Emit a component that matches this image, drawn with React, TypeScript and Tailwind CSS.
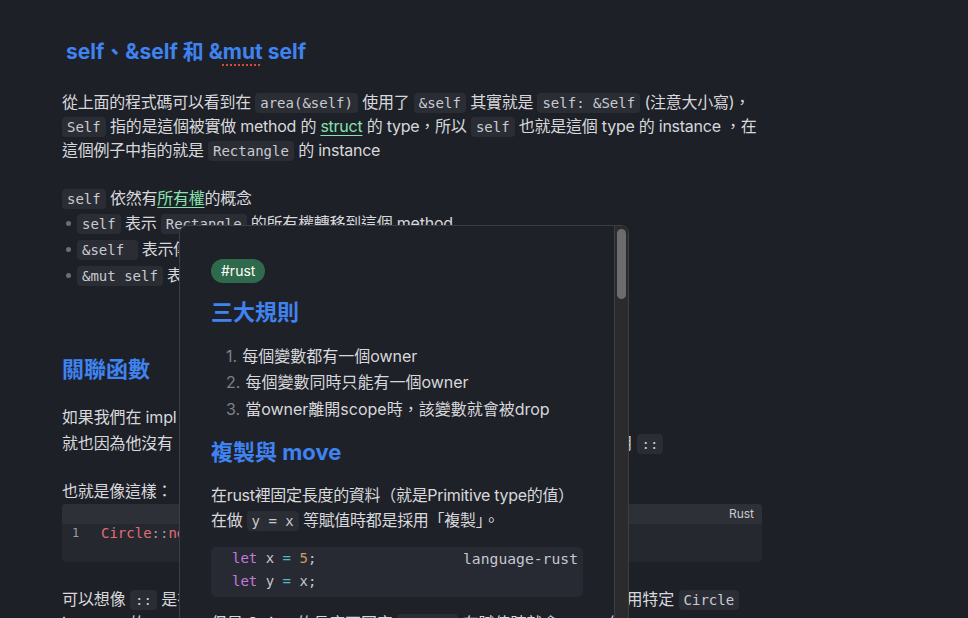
const code =
  "rounded-[4px] bg-[#2b2d35] px-[5px] py-[2px] font-['DejaVu_Sans_Mono',monospace] text-[14px] leading-[16px] tracking-normal text-[#c9cbd1]";

const link = "text-[#86e3b0] underline underline-offset-[3px] decoration-[#86e3b0]";

const Bullet = () => (
  <span className="mr-[6px] ml-[4px] inline-block h-[5px] w-[5px] translate-y-[-3px] rounded-full bg-[#6b6f78]" />
);

function Popover() {
  return (
    <div className="absolute left-[179px] top-[225px] flex h-[420px] w-[450px] overflow-hidden rounded-t-[8px] border border-[#3d3e44] bg-[#1f2129]">
      <div className="min-w-0 flex-1 overflow-hidden pl-[31px] pr-[31px] pt-[32px]">
        <span className="inline-flex h-[24px] items-center rounded-full bg-[#2e6a4b] px-[10px] text-[14px] text-white">
          #rust
        </span>
        <h3 className="mt-[14px] text-[22px] font-bold leading-[30px] text-[#3f83f0]">三大規則</h3>
        <ol className="mt-[16px] pl-[15px] text-[16px] leading-[26.5px]">
          <li>
            <span className="mr-[5px] text-[#7d828c]">1.</span>每個變數都有一個owner
          </li>
          <li>
            <span className="mr-[5px] text-[#7d828c]">2.</span>每個變數同時只能有一個owner
          </li>
          <li>
            <span className="mr-[5px] text-[#7d828c]">3.</span>當owner離開scope時，該變數就會被drop
          </li>
        </ol>
        <h3 className="mt-[15px] text-[22px] font-bold leading-[30px] text-[#3f83f0]">複製與 move</h3>
        <p className="mt-[16px] whitespace-nowrap text-[16px] leading-[25px] tracking-[-0.3px]">
          在rust裡固定長度的資料（就是Primitive type的值）
          <br />
          在做 <span className={code}>y = x</span> 等賦值時都是採用「複製」。
        </p>
        <div className="relative mt-[14px] rounded-[5px] bg-[#282a33] pb-[4px] pl-[21px] font-['DejaVu_Sans_Mono',monospace] text-[14px] leading-[23px] text-[#c5c8ce]">
          <span className="absolute right-[5px] top-0 text-[14.7px] text-[#c5c8ce]">language-rust</span>
          <div>
            <span className="text-[#c678dd]">let</span> x <span className="text-[#56b6c2]">=</span>{" "}
            <span className="text-[#d19a66]">5</span>;
          </div>
          <div>
            <span className="text-[#c678dd]">let</span> y <span className="text-[#56b6c2]">=</span> x;
          </div>
        </div>
        <p className="mt-[14px] whitespace-nowrap text-[16px] leading-[25px]">
          但是 String 的長度不固定 <span className={code}>let s2</span> 在賦值時就會 move 給新的變數
        </p>
      </div>
      <div className="w-[14px] shrink-0 border-l border-[#3d3e44] bg-[#2b2b2d] pl-[2px] pt-[3px]">
        <div className="h-[70px] w-[9px] rounded-full bg-[#6c6c6e]" />
      </div>
    </div>
  );
}

export default function App() {
  return (
    <div className="relative h-[618px] w-full overflow-hidden bg-[#1e2028] font-['Inter','Noto_Sans_CJK_TC',sans-serif] text-[#d7d8db]">
      <div className="ml-[62px] w-[700px] whitespace-nowrap pt-[37px] text-[16px] tracking-[-0.25px]">
        <h2 className="pl-[4px] text-[21px] font-bold leading-[30px] tracking-normal text-[#3f83f0]">
          self、&amp;self 和 &amp;
          <span className="underline decoration-[#d9483b] decoration-dotted decoration-2 underline-offset-[5px]">mut</span>{" "}
          self
        </h2>
        <p className="mt-[23px] leading-[24px]">
          從上面的程式碼可以看到在 <span className={code}>area(&amp;self)</span> 使用了{" "}
          <span className={code}>&amp;self</span> 其實就是 <span className={code}>self: &amp;Self</span> (注意大小寫)，
          <br />
          <span className={code}>Self</span> 指的是這個被實做 method 的 <span className={link}>struct</span> 的 type，所以{" "}
          <span className={code}>self</span> 也就是這個 type 的 instance ，在
          <br />
          這個例子中指的就是 <span className={code}>Rectangle</span> 的 instance
        </p>
        <p className="mt-[24px] leading-[24px]">
          <span className={code}>self</span> 依然有<span className={link}>所有權</span>的概念
        </p>
        <ul className="leading-[26px]">
          <li>
            <Bullet />
            <span className={code}>self</span> 表示 <span className={code}>Rectangle</span> 的所有權轉移到這個 method
          </li>
          <li>
            <Bullet />
            <span className={code}>&amp;self&nbsp;</span> 表示傳入 <span className={code}>Rectangle</span> 的不可變參考
          </li>
          <li>
            <Bullet />
            <span className={code}>&amp;mut self</span> 表示傳入 <span className={code}>Rectangle</span> 的可變參考
          </li>
        </ul>
        <h2 className="mt-[66px] text-[22px] font-bold leading-[30px] tracking-normal text-[#3f83f0]">關聯函數</h2>
        <p className="mt-[20px] leading-[26px] tracking-[-0.15px]">
          如果我們在 impl 裡定義的函數沒有 self 參數，就叫做關聯函數，
          <br />
          就也因為他沒有 「self」參數，所以不能透過實例加上點來呼叫函數，而是要使用{" "}
          <span className={code}>::</span>
        </p>
        <p className="mt-[22px] leading-[26px]">也就是像這樣：</p>
        <div className="overflow-hidden rounded-[4px] bg-[#262830] tracking-normal">
          <div className="flex h-[20px] items-center justify-end bg-[#2e3037] px-[8px] text-[12px] text-[#c9c9cb]">
            Rust
          </div>
          <div className="flex h-[38px] font-['DejaVu_Sans_Mono',monospace] text-[14px] leading-[18px]">
            <span className="w-[39px] pl-[10px] text-[12px] text-[#9a9ca3]">1</span>
            <span>
              <span className="text-[#e06c75]">Circle</span>
              <span className="text-[#9a9ca3]">::</span>
              <span className="text-[#e06c75]">new</span>
              <span className="text-[#c5c8ce]">(10.0);</span>
            </span>
          </div>
        </div>
        <p className="mt-[25px] leading-[24px] tracking-[-0.1px]">
          可以想像 <span className={code}>::</span> 是在存取這個 struct 命名空間裡面所定義的函數，所以這裡就要使用特定{" "}
          <span className={code}>Circle</span>
          <br />
          instance 的 method 則是使用 . 來呼叫
        </p>
      </div>
      <Popover />
    </div>
  );
}
